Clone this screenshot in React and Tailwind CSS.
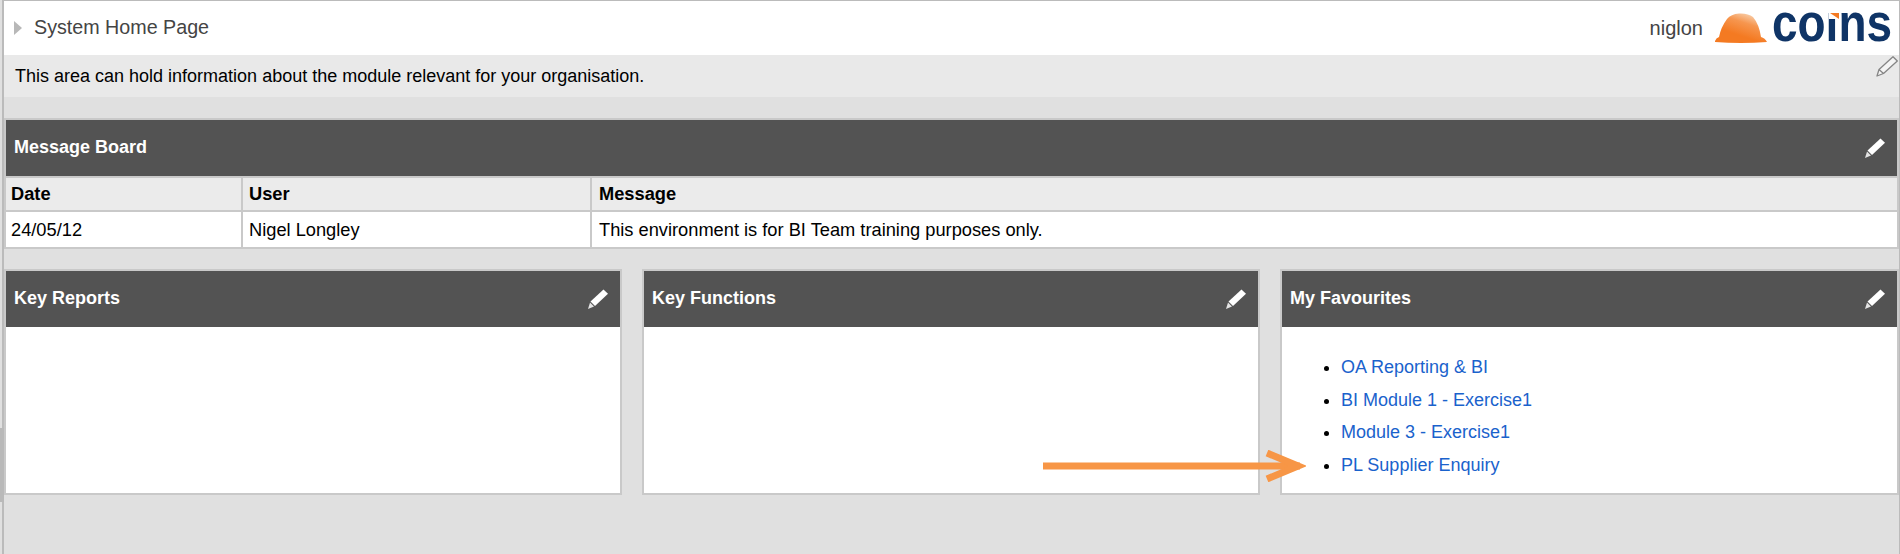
import React from "react";

function Pencil({ outline = false, className = "" }) {
  return (
    <svg viewBox="0 0 22 21" className={className}>
      {outline ? (
        <path d="M17 0.8 L21.3 5 L7.5 17.5 L1 20 L3 13.5 Z M3 13.5 L7.5 17.5" fill="#f4f4f4" stroke="#858585" strokeWidth="1.3" strokeLinejoin="round" />
      ) : (
        <>
          <path d="M16.5 0.5 L21 4.8 L8 17 L3.5 12.6 Z" fill="#fff" />
          <path d="M3 13.5 L7 17.6 L1 20 Z" fill="#e4e4e4" />
        </>
      )}
    </svg>
  );
}

function PanelHeader({ title }) {
  return (
    <div className="h-[56px] bg-[#535353] flex items-center justify-between pl-[8px] pr-[11px]">
      <span className="text-white font-bold text-[18px] mb-[2px]">{title}</span>
      <Pencil className="w-[22px] h-[21px]" />
    </div>
  );
}

function Panel({ title, children }) {
  return (
    <div className="border-2 border-[#c9c9c9] bg-white h-[226px] flex flex-col">
      <PanelHeader title={title} />
      {children}
    </div>
  );
}

function Logo() {
  return (
    <div className="flex items-center gap-[5px]">
      <svg viewBox="0 0 52 30" className="w-[52px] h-[30px]">
        <defs>
          <linearGradient id="hat" x1="0.75" y1="0.1" x2="0.4" y2="0.7">
            <stop offset="0" stopColor="#f8c8a0" />
            <stop offset="0.4" stopColor="#f6964f" />
            <stop offset="1" stopColor="#f47a22" />
          </linearGradient>
        </defs>
        <path d="M0 28 Q1 25 4 24 Q6 14 12 6 Q16 1 24 0.5 Q33 0 38 4 Q44 11 46 24 Q50 25 52 29 Q26 31 0 29 Z" fill="url(#hat)" />
      </svg>
      <svg viewBox="0 0 120 32" className="w-[120px] h-[32px] overflow-visible">
        <text x="0" y="29" fontSize="54" fontWeight="700" fill="#0f3466" textLength="120" lengthAdjust="spacingAndGlyphs">coıns</text>
        <rect x="57" y="0" width="10" height="7" fill="#fff" />
        <path d="M58 1 H67 V7 Z" fill="#f47a22" />
      </svg>
    </div>
  );
}

export default function App() {
  return (
    <div className="relative h-[554px] bg-[#e0e0e0] font-['Liberation_Sans',Arial,sans-serif] pl-[2px]">
      <div className="h-full border-l-2 border-r border-t border-[#bbbbbb]">
        <div className="h-[54px] bg-white flex items-center justify-between pr-[7px]">
          <div className="flex items-center">
            <svg viewBox="0 0 8 14" className="w-[8px] h-[14px] ml-[10px] mr-[12px]">
              <path d="M0 0 L8 7 L0 14 Z" fill="#b8b8b8" />
            </svg>
            <span className="text-[19.7px] text-[#444444]">System Home Page</span>
          </div>
          <div className="flex items-center gap-[12px]">
            <span className="text-[20px] text-[#444444]">niglon</span>
            <Logo />
          </div>
        </div>
        <div className="relative h-[42px] bg-[#e9e9e9] flex items-center pl-[11px] text-black text-[18px]">
          This area can hold information about the module relevant for your organisation.
          <Pencil outline className="absolute right-[1px] top-[1px] w-[22px] h-[21px]" />
        </div>

        <div className="mt-[21px] border-2 border-[#c9c9c9] bg-[#c9c9c9]">
          <PanelHeader title="Message Board" />
          <div className="grid grid-cols-[235px_347px_1fr] gap-[2px] mt-[2px] text-black text-[18.25px]">
            <div className="h-[32px] bg-[#ebebeb] font-bold flex items-center pl-[5px]">Date</div>
            <div className="h-[32px] bg-[#ebebeb] font-bold flex items-center pl-[6px]">User</div>
            <div className="h-[32px] bg-[#ebebeb] font-bold flex items-center pl-[7px]">Message</div>
            <div className="h-[35px] bg-white flex items-center pl-[5px]">24/05/12</div>
            <div className="h-[35px] bg-white flex items-center pl-[6px]">Nigel Longley</div>
            <div className="h-[35px] bg-white flex items-center pl-[7px]">This environment is for BI Team training purposes only.</div>
          </div>
        </div>

        <div className="grid grid-cols-[618px_618px_1fr] gap-[20px] mt-[20px]">
          <Panel title="Key Reports" />
          <Panel title="Key Functions" />
          <Panel title="My Favourites">
            <ul className="list-disc pl-[59px] pt-[24px] text-[18px] text-[#1a62cc] marker:text-black">
              <li className="h-[32.7px] leading-[32.7px]"><a>OA Reporting &amp; BI</a></li>
              <li className="h-[32.7px] leading-[32.7px]"><a>BI Module 1 - Exercise1</a></li>
              <li className="h-[32.7px] leading-[32.7px]"><a>Module 3 - Exercise1</a></li>
              <li className="h-[32.7px] leading-[32.7px]"><a>PL Supplier Enquiry</a></li>
            </ul>
          </Panel>
        </div>
      </div>

      <div className="absolute left-0 top-[428px] w-[4px] h-[74px] bg-[#b9b9b9]" />

      <svg viewBox="0 0 264 32" className="absolute left-[1042px] top-[450px] w-[264px] h-[32px]">
        <path d="M1 16 H258" stroke="#f79646" strokeWidth="7" fill="none" />
        <path d="M225 3 L256 16 L225 29" stroke="#f79646" strokeWidth="7" fill="none" />
      </svg>
    </div>
  );
}
